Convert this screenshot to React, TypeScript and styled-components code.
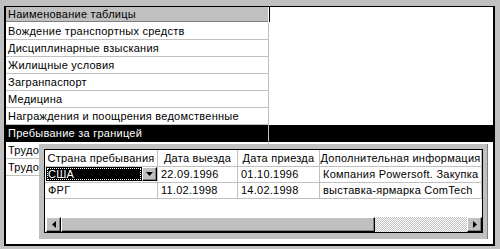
import React from 'react';
import styled, {createGlobalStyle, css} from 'styled-components';

const GlobalStyle = createGlobalStyle`
    html, body {
        margin: 0;
        background: #c0c0c0;
    }
    body {
        font-family: "Liberation Sans", Arial, sans-serif;
        font-size: 11px;
        letter-spacing: 0.25px;
        color: #000;
    }
`

const Screen = styled.div`
    width: 500px;
    height: 249px;
    box-sizing: border-box;
    padding: 6px 5px 3px 4px;
`

const Frame = styled.div`
    position: relative;
    height: 240px;
    box-sizing: border-box;
    border: 2px solid #000;
    border-top-width: 1px;
    background: #fff;
    overflow: hidden;
`

const HeadRow = styled.div`
    display: flex;
    height: 16px;
`

const HeadCell = styled.div`
    width: 262px;
    height: 15px;
    line-height: 15px;
    padding-left: 2px;
    box-sizing: border-box;
    background: #c0c0c0;
    border-bottom: 1px solid #808080;
    box-shadow: 1px 0 0 #fff, 2px 0 0 #000;
`

const Row = styled.div<{$selected?: boolean}>`
    display: flex;
    height: 17px;
    ${p => p.$selected && css`
        background: #000;
        color: #fff;
    `}
`

const NameCell = styled.div<{$selected?: boolean}>`
    width: 263px;
    height: 17px;
    box-sizing: border-box;
    padding: 1px 0 0 2px;
    line-height: 15px;
    white-space: nowrap;
    overflow: hidden;
    border-right: 1px solid #c0c0c0;
    border-bottom: 1px solid ${p => (p.$selected ? '#000' : '#c0c0c0')};
`

const Panel = styled.div`
    position: absolute;
    left: 33px;
    top: 137px;
    width: 449px;
    height: 95px;
    box-sizing: border-box;
    padding: 5px 4px 6px 5px;
    background: #c0c0c0;
    border-right: 1px solid #808080;
    display: flex;
`

const Grid = styled.div`
    flex: 1;
    display: flex;
    flex-direction: column;
    border: 1px solid #000;
    background: #fff;
    overflow: hidden;
`

const GridRow = styled.div<{$head?: boolean}>`
    display: grid;
    grid-template-columns: 113px 80px 82px 1fr;
    height: ${p => (p.$head ? '17px' : '16px')};
`

const GridCell = styled.div<{$head?: boolean}>`
    box-sizing: border-box;
    border-right: 1px solid #c0c0c0;
    border-bottom: 1px solid #c0c0c0;
    white-space: nowrap;
    overflow: hidden;
    line-height: 15px;
    padding: ${p => (p.$head ? '1px 0 0 0' : '0 0 0 3px')};
    text-align: ${p => (p.$head ? 'center' : 'left')};
`

const ComboCell = styled.div`
    display: flex;
    padding: 0 0 1px 1px;
    border-right: 1px solid #c0c0c0;
    border-bottom: 1px solid #c0c0c0;
`

const ComboField = styled.div`
    flex: 1;
    background: #000;
    color: #fff;
    line-height: 14px;
    padding-left: 2px;
    outline: 1px dotted #fff;
    outline-offset: -2px;
`

const Bevel = css`
    background: #c0c0c0;
    box-sizing: border-box;
    border: 1px solid;
    border-color: #fff #000 #000 #fff;
    box-shadow: inset -1px -1px 0 #808080;
`

const ComboButton = styled.div`
    ${Bevel};
    width: 15px;
    display: flex;
    align-items: center;
    justify-content: center;
`

const Spacer = styled.div`
    flex: 1;
`

const ScrollBar = styled.div`
    display: flex;
    height: 15px;
    margin: 0 0 0 1px;
`

const ScrollButton = styled.div`
    ${Bevel};
    width: 15px;
    display: flex;
    align-items: center;
    justify-content: center;
`

const Thumb = styled.div`
    ${Bevel};
    width: 314px;
`

const Track = styled.div`
    flex: 1;
    background-color: #fff;
    background-image: repeating-conic-gradient(#c0c0c0 0 25%, #fff 0 50%);
    background-size: 2px 2px;
`

const Arrow = ({dir}: {dir: 'down' | 'left' | 'right'}) => {
    const points = dir === 'down' ? '0,0 7,0 3.5,4' : dir === 'left' ? '4,0 4,7 0,3.5' : '0,0 0,7 4,3.5';
    const w = dir === 'down' ? 7 : 4;
    const h = dir === 'down' ? 4 : 7;
    return (
        <svg width={w} height={h} viewBox={`0 0 ${w} ${h}`}>
            <polygon points={points} fill="#000"/>
        </svg>
    )
}

const tables = [
    'Вождение транспортных средств',
    'Дисциплинарные взыскания',
    'Жилищные условия',
    'Загранпаспорт',
    'Медицина',
    'Награждения и поощрения ведомственные',
    'Пребывание за границей',
    'Трудовая деятельность',
    'Трудовой стаж',
];

const trips = [
    {country: 'ФРГ', out: '11.02.1998', back: '14.02.1998', info: 'выставка-ярмарка ComTech'},
];

export default function App() {
    return (
        <Screen>
            <GlobalStyle/>
            <Frame>
                <HeadRow>
                    <HeadCell>Наименование таблицы</HeadCell>
                </HeadRow>
                {tables.map(name => {
                    const selected = name === 'Пребывание за границей';
                    return (
                        <Row key={name} $selected={selected}>
                            <NameCell $selected={selected}>{name}</NameCell>
                        </Row>
                    )
                })}
                <Panel>
                    <Grid>
                        <GridRow $head>
                            <GridCell $head>Страна пребывания</GridCell>
                            <GridCell $head>Дата выезда</GridCell>
                            <GridCell $head>Дата приезда</GridCell>
                            <GridCell $head>Дополнительная информация</GridCell>
                        </GridRow>
                        <GridRow>
                            <ComboCell>
                                <ComboField>США</ComboField>
                                <ComboButton><Arrow dir="down"/></ComboButton>
                            </ComboCell>
                            <GridCell>22.09.1996</GridCell>
                            <GridCell>01.10.1996</GridCell>
                            <GridCell>Компания Powersoft. Закупка</GridCell>
                        </GridRow>
                        {trips.map(t => (
                            <GridRow key={t.country}>
                                <GridCell>{t.country}</GridCell>
                                <GridCell>{t.out}</GridCell>
                                <GridCell>{t.back}</GridCell>
                                <GridCell>{t.info}</GridCell>
                            </GridRow>
                        ))}
                        <Spacer/>
                        <ScrollBar>
                            <ScrollButton><Arrow dir="left"/></ScrollButton>
                            <Thumb/>
                            <Track/>
                            <ScrollButton><Arrow dir="right"/></ScrollButton>
                        </ScrollBar>
                    </Grid>
                </Panel>
            </Frame>
        </Screen>
    )
}
